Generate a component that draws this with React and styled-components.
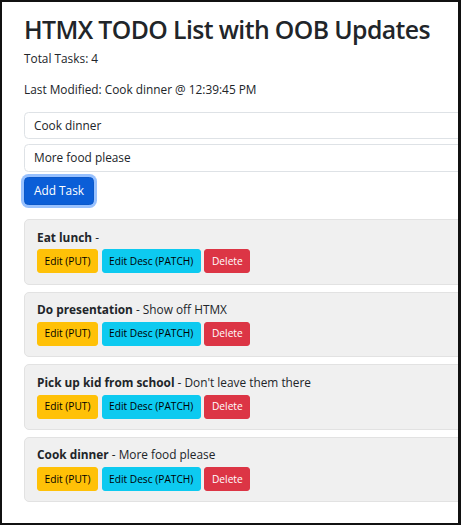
import React from "react";
import styled, { createGlobalStyle } from "styled-components";

const GlobalStyle = createGlobalStyle`
  html, body { margin: 0; padding: 0; background: #fff; }
  body {
    font-family: "Open Sans", "Noto Sans", sans-serif;
    font-size: 11.85px;
    line-height: 1.5;
    color: #212529;
  }
  * { box-sizing: border-box; }
`;

const Frame = styled.div`
  width: 461px;
  height: 525px;
  border: 2px solid #111;
  border-right-width: 3px;
  overflow: hidden;
  background: #fff;
`;

const Container = styled.main`
  width: 720px;
  padding: 12.3px 0 0 22px;
`;

const Title = styled.h1`
  margin: 0 0 6px;
  font-size: 24.8px;
  font-weight: 600;
  line-height: 1.21;
  letter-spacing: -0.6px;
  white-space: nowrap;
`;

const Info = styled.p`
  margin: 0 0 ${p => p.$gap}px;
`;

const Input = styled.input`
  display: block;
  width: 100%;
  margin: 0 0 5px;
  padding: 4px 9px;
  font: inherit;
  line-height: 1.5;
  color: #212529;
  background: #fff;
  border: 1px solid #dee2e6;
  border-radius: 4.5px;
  outline: none;
`;

const Form = styled.form`
  margin: 0 0 14px;
`;

const PrimaryButton = styled.button`
  display: inline-block;
  padding: 4px 9px;
  font: inherit;
  line-height: 1.5;
  color: #fff;
  background: #0b5ed7;
  border: 1px solid #0a58ca;
  border-radius: 4.5px;
  box-shadow: 0 0 0 3px rgba(49, 132, 253, 0.5);
  cursor: pointer;
`;

const TaskList = styled.div`
  display: flex;
  flex-direction: column;
  gap: 7.1px;
`;

const Card = styled.div`
  padding: 8.5px 12px 10.2px;
  background: #f0f0f0;
  border: 1px solid #e2e2e2;
  border-radius: 5px;
`;

const TaskLine = styled.div`
  margin-bottom: 3px;
  white-space: nowrap;
`;

const TaskName = styled.strong`
  font-weight: 700;
`;

const Actions = styled.div`
  display: flex;
  gap: 3.6px;
`;

const variants = {
  warning: { bg: "#ffc107", border: "#ffc107", color: "#000" },
  info: { bg: "#0dcaf0", border: "#0dcaf0", color: "#000" },
  danger: { bg: "#dc3545", border: "#dc3545", color: "#fff" },
};

const SmallButton = styled.button`
  padding: 3.4px 6.5px;
  font-family: inherit;
  font-size: 10.2px;
  line-height: 1.5;
  white-space: nowrap;
  color: ${p => variants[p.$variant].color};
  background: ${p => variants[p.$variant].bg};
  border: 1px solid ${p => variants[p.$variant].border};
  border-radius: 3px;
  cursor: pointer;
`;

const tasks = [
  { name: "Eat lunch", desc: "" },
  { name: "Do presentation", desc: "Show off HTMX" },
  { name: "Pick up kid from school", desc: "Don't leave them there" },
  { name: "Cook dinner", desc: "More food please" },
];

export default function App() {
  return (
    <>
      <GlobalStyle />
      <Frame>
        <Container>
          <Title>HTMX TODO List with OOB Updates</Title>
          <Info $gap={12.9}>Total Tasks: 4</Info>
          <Info $gap={13}>Last Modified: Cook dinner @ 12:39:45 PM</Info>
          <Form onSubmit={e => e.preventDefault()}>
            <Input defaultValue="Cook dinner" />
            <Input defaultValue="More food please" />
            <PrimaryButton type="submit">Add Task</PrimaryButton>
          </Form>
          <TaskList>
            {tasks.map(t => (
              <Card key={t.name}>
                <TaskLine>
                  <TaskName>{t.name}</TaskName> - {t.desc}
                </TaskLine>
                <Actions>
                  <SmallButton $variant="warning">Edit (PUT)</SmallButton>
                  <SmallButton $variant="info">Edit Desc (PATCH)</SmallButton>
                  <SmallButton $variant="danger">Delete</SmallButton>
                </Actions>
              </Card>
            ))}
          </TaskList>
        </Container>
      </Frame>
    </>
  );
}
